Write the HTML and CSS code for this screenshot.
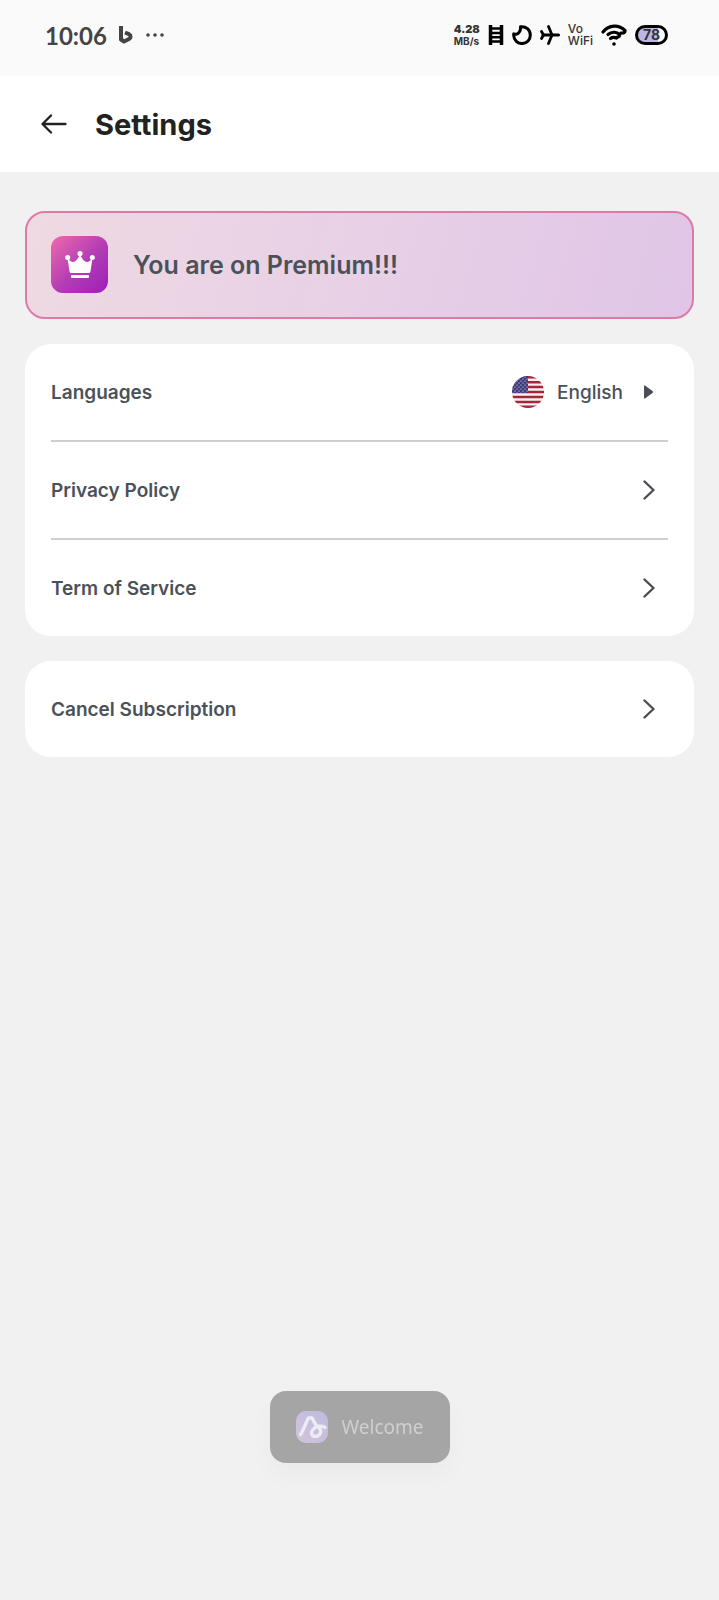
FILE: index.html
```
<!DOCTYPE html>
<html lang="en">
<head>
    <meta charset="UTF-8">
    <meta name="viewport" content="width=device-width, initial-scale=1.0">
    <title>Settings</title>
    <link rel="stylesheet" href="styles.css">
</head>
<body>
    <div class="status-bar">
        <div class="status-left">
            <span class="clock">10:06</span>
            <svg width="14" height="18" viewBox="0 0 14 18" fill="none" stroke="#444" stroke-width="4" stroke-linejoin="round">
                <path d="M2 0v13.500l3 2 5-2.500c2-1.200 2.200-3.600 0-4.800L6 6.500"/>
            </svg>
            <svg width="20" height="6" viewBox="0 0 20 6" fill="#444">
                <circle cx="3" cy="3" r="1.800"/><circle cx="10" cy="3" r="1.800"/><circle cx="17" cy="3" r="1.800"/>
            </svg>
        </div>
        <div class="status-right">
            <div class="speed"><b>4.28</b><span>MB/s</span></div>
            <svg width="16" height="20" viewBox="0 0 16 20" fill="none" stroke="#000">
                <path d="M2.500 0v20M13.500 0v20" stroke-width="3.500"/>
                <path d="M2 3.500h12M2 8h12M2 12.200h12M2 16.500h12" stroke-width="2.400"/>
            </svg>
            <svg width="20" height="20" viewBox="0 0 20 20" fill="none" stroke="#000" stroke-width="3" stroke-linejoin="round">
                <path d="M8.500 1.800C14 1 18.300 4.800 18.300 10a8.300 8.300 0 0 1-16.600 0.500L1.700 8.800c2 1 4.300.3 5.300-1.300 1-1.500 2-3.500 1.500-5.700z"/>
            </svg>
            <svg width="20" height="20" viewBox="0 0 20 20" fill="none" stroke="#000" stroke-width="3" stroke-linecap="round" stroke-linejoin="round">
                <path d="M3 10h15.500"/>
                <path d="M8.500 1.500 12 10l-3.500 8.500M1.500 6.500 3.500 10l-2 3.500" stroke-width="2.800"/>
            </svg>
            <div class="vowifi"><span>Vo</span><span>WiFi</span></div>
            <svg width="26" height="22" viewBox="0 0 26 22" fill="none" stroke="#000" stroke-width="3.200" stroke-linecap="round" stroke-linejoin="round">
                <path d="M2 8C8 .500 18 .500 24 6.500c.3 1.800-1.500 2.800-4 2.500"/>
                <path d="M7 10.500c4-3.500 9-2.500 11.500 0 .5 1.500-.5 2.800-3 2.800"/>
                <path d="M9.500 14.500c1.500-1.200 4-1.200 6-.5"/>
                <circle cx="13" cy="20" r="1.800" fill="#000" stroke="none"/>
            </svg>
            <span class="battery">78</span>
        </div>
    </div>

    <header class="header">
        <button class="back" aria-label="Back">
            <svg width="26" height="20" viewBox="0 0 26 20" fill="none" stroke="#222" stroke-width="2.300" stroke-linecap="round" stroke-linejoin="round">
                <path d="M24.500 10H1.500M10 1.500 1.500 10l8.500 8.500"/>
            </svg>
        </button>
        <h1>Settings</h1>
    </header>

    <main>
        <section class="premium">
            <div class="crown">
                <svg width="30" height="28" viewBox="0 0 30 28" fill="#fff">
                    <path d="M2.500 7 C7 13.500 11.500 12 15 3 C18.500 12 23 13.500 27.500 7 L25.500 20.500Q25.200 22 24 22H6Q4.800 22 4.500 20.500z"/>
                    <circle cx="2.700" cy="6.500" r="2.500"/>
                    <circle cx="15" cy="2.600" r="2.600"/>
                    <circle cx="27.300" cy="6.500" r="2.500"/>
                    <rect x="6" y="24" width="18" height="3" rx="1"/>
                </svg>
            </div>
            <h2>You are on Premium!!!</h2>
        </section>

        <nav class="card">
            <div class="row">
                <span id="lang-label">Languages</span>
                <button class="language" aria-describedby="lang-label">
                    <svg width="32" height="32" viewBox="0 0 32 32">
                        <defs>
                            <clipPath id="round"><circle cx="16" cy="16" r="16"/></clipPath>
                            <pattern id="stars" width="4" height="4" patternUnits="userSpaceOnUse">
                                <circle cx="1" cy="1" r=".6" fill="#fff"/><circle cx="3" cy="3" r=".6" fill="#fff"/>
                            </pattern>
                        </defs>
                        <g clip-path="url(#round)">
                            <path fill="#f5f0f4" d="M0 0h32v32H0z"/>
                            <path stroke="#a62638" stroke-width="2.500" d="M0 1.200h32M0 6.200h32M0 11.100h32M0 16h32M0 21h32M0 25.900h32M0 30.800h32"/>
                            <path fill="#3f3b7c" d="M0 0h16v17H0z"/>
                            <path fill="url(#stars)" d="M0 0h16v17H0z"/>
                        </g>
                    </svg>
                    <span>English</span>
                    <svg width="9" height="14" viewBox="0 0 9 14" fill="#4a4d52"><path d="M0 1q0-1 1-.5L8.500 6q1 1 0 2L1 13.500q-1 .5-1-.5z"/></svg>
                </button>
            </div>
            <a class="row" href="#privacy">
                <span>Privacy Policy</span>
                <svg class="chevron" width="12" height="20" viewBox="0 0 12 20"><path d="M1.500 1.500 10.500 10l-9 8.500"/></svg>
            </a>
            <a class="row" href="#terms">
                <span>Term of Service</span>
                <svg class="chevron" width="12" height="20" viewBox="0 0 12 20"><path d="M1.500 1.500 10.500 10l-9 8.500"/></svg>
            </a>
        </nav>

        <div class="card">
            <a class="row" href="#cancel">
                <span>Cancel Subscription</span>
                <svg class="chevron" width="12" height="20" viewBox="0 0 12 20"><path d="M1.500 1.500 10.500 10l-9 8.500"/></svg>
            </a>
        </div>
    </main>

    <div class="toast" role="status">
        <svg width="32" height="32" viewBox="0 0 32 32" fill="none">
            <defs>
                <linearGradient id="logo" x1="0" y1="1" x2="1" y2="0">
                    <stop offset="0" stop-color="#d3c3db"/><stop offset="1" stop-color="#bdbbe0"/>
                </linearGradient>
            </defs>
            <rect width="32" height="32" rx="10" fill="url(#logo)"/>
            <path d="M4.500 23.500C8 18 10 11 12.500 7h3.500c2 4 4 8 8 11 2 3-.5 7.500-4.500 7.500s-5-4-2.500-7 7-4.500 12-2" stroke="#edebf3" stroke-width="3.400" stroke-linecap="round" stroke-linejoin="round"/>
        </svg>
        <span>Welcome</span>
    </div>
</body>
</html>
```
FILE: styles.css
```
* {
    margin: 0;
    padding: 0;
    box-sizing: border-box;
}

body {
    font-family: Inter, "Liberation Sans", sans-serif;
    background: #f1f1f1;
    color: #4b5159;
    min-height: 100vh;
}

button {
    font: inherit;
    color: inherit;
    background: none;
    border: none;
    cursor: pointer;
}

svg {
    display: block;
    flex-shrink: 0;
}

/* Status bar */
.status-bar {
    display: flex;
    justify-content: space-between;
    align-items: center;
    height: 76px;
    padding: 0 51px 6px 45px;
    background: #fafafa;
}

.status-left,
.status-right {
    display: flex;
    align-items: center;
}

.status-left {
    gap: 12px;
    color: #444;
}

.status-right {
    gap: 8px;
    color: #333;
}

.clock {
    font-family: Lato, sans-serif;
    font-size: 24px;
    font-weight: 700;
}

.speed,
.vowifi {
    display: flex;
    flex-direction: column;
}

.speed {
    font-size: 11px;
    line-height: 12px;
    font-weight: 700;
}

.speed span {
    font-size: 10px;
}

.vowifi {
    font-size: 12px;
    line-height: 12px;
    font-weight: 500;
}

.battery {
    width: 33px;
    height: 20px;
    border: 3px solid #000;
    border-radius: 10px;
    background: linear-gradient(90deg, #bdb5e6 75%, #fafafa 75%);
    color: #333;
    font-size: 14px;
    line-height: 14px;
    font-weight: 700;
    text-align: center;
}

/* Header */
.header {
    display: flex;
    align-items: center;
    gap: 28px;
    height: 96px;
    padding: 0 41px;
    background: #fff;
}

.header h1 {
    color: #222;
    font-size: 29px;
    font-weight: 700;
}

main {
    display: flex;
    flex-direction: column;
    gap: 25px;
    padding: 39px 25px;
}

/* Premium banner */
.premium {
    display: flex;
    align-items: center;
    gap: 25px;
    padding: 23px 24px 24px;
    border: 2px solid #dc7ba5;
    border-radius: 20px;
    background: linear-gradient(105deg, #efd9e2, #e8d0e6 50%, #e0c5e7);
}

.premium h2 {
    font-size: 25px;
    font-weight: 600;
}

.crown {
    display: flex;
    align-items: center;
    justify-content: center;
    width: 57px;
    height: 57px;
    border-radius: 12px;
    background: linear-gradient(135deg, #ee6aac, #b23bb5 55%, #9c1fb8);
}

/* Setting rows */
.card {
    padding: 0 26px;
    border-radius: 26px;
    background: #fff;
}

.row {
    display: flex;
    align-items: center;
    justify-content: space-between;
    height: 96px;
    padding-right: 13px;
    color: inherit;
    font-size: 19px;
    font-weight: 600;
    text-decoration: none;
    position: relative;
}

.row + .row {
    margin-top: 2px;
}

/* divider sits in the 2px gap between rows */
.row + .row::before {
    content: "";
    position: absolute;
    top: -2px;
    left: 0;
    right: 0;
    height: 2px;
    background: #cfcfcf;
}

.language {
    display: flex;
    align-items: center;
    gap: 13px;
    padding-right: 2px;
    font-weight: 500;
}

.language span {
    margin-right: 8px;
}

.chevron {
    fill: none;
    stroke: #4a4d52;
    stroke-width: 2.4;
    stroke-linecap: round;
    stroke-linejoin: round;
}

/* Toast */
.toast {
    display: flex;
    align-items: center;
    gap: 14px;
    height: 72px;
    padding: 0 26px;
    border-radius: 16px;
    background: #a5a5a5;
    color: #cfcfcf;
    font-family: "Noto Sans", sans-serif;
    font-size: 19px;
    box-shadow: 0 12px 24px rgba(0, 0, 0, 0.03);
    position: fixed;
    bottom: 137px;
    left: 50%;
    transform: translateX(-50%);
}
```
